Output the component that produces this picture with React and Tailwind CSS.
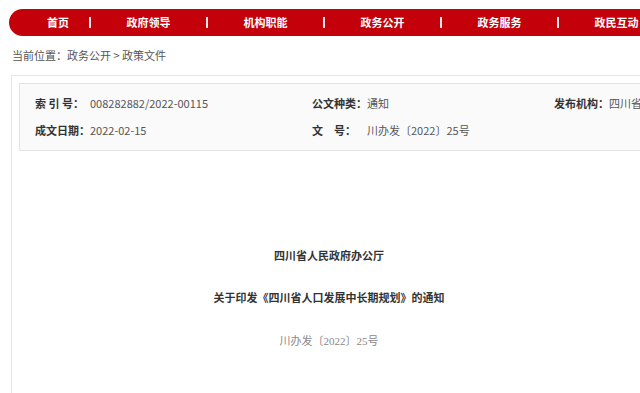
import React from "react";

const navItems = ["政府领导", "机构职能", "政务公开", "政务服务", "政民互动"];

function InfoCell({ label, value, width }) {
  return (
    <div className={`flex items-center shrink-0 ${width}`}>
      <span className="w-[55px] shrink-0 font-bold text-[#333]">{label}</span>
      <span className="whitespace-nowrap text-[#555]">{value}</span>
    </div>
  );
}

export default function App() {
  return (
    <div
      className="w-[640px] h-[393px] overflow-hidden bg-white"
      style={{ fontFamily: '"Noto Sans CJK SC", "Liberation Sans", sans-serif' }}
    >
      <div className="w-[700px]">
        {/* top nav */}
        <nav className="ml-[9px] mt-[9px] h-[27px] bg-[#c4000b] rounded-l-full flex items-center text-white text-[11px] font-bold">
          <span className="pl-[18px] w-[80px] text-center shrink-0">首页</span>
          {navItems.map((item) => (
            <React.Fragment key={item}>
              <span className="w-[2px] h-[11px] bg-white/90 shrink-0" />
              <span className="w-[115px] text-center shrink-0">{item}</span>
            </React.Fragment>
          ))}
        </nav>

        {/* breadcrumb */}
        <div className="h-[39px] flex items-center pl-[12px] text-[11px] text-[#555]">
          当前位置：政务公开 &gt; 政策文件
        </div>

        {/* main panel */}
        <div className="ml-[11px] w-[636px] h-[400px] border border-[#e6e6e6]">
          <div className="ml-[7px] mt-[7px] w-[700px] h-[68px] border border-[#e3e3e3] bg-[#fafafa] pl-[15px] pt-[9px] text-[11px]">
            <div className="flex h-[20px]">
              <InfoCell label="索 引 号：" value="008282882/2022-00115" width="w-[277px]" />
              <InfoCell label="公文种类：" value="通知" width="w-[242px]" />
              <InfoCell label="发布机构：" value="四川省人民政府办公厅" width="w-[200px]" />
            </div>
            <div className="flex h-[20px] mt-[7px]">
              <InfoCell label="成文日期：" value="2022-02-15" width="w-[277px]" />
              <InfoCell label="文　号：" value="川办发〔2022〕25号" width="w-[242px]" />
            </div>
          </div>

          <div
            className="flex flex-col items-center text-[11px]"
            style={{ fontFamily: '"Liberation Serif", "Noto Sans CJK SC", serif' }}
          >
            <div className="mt-[95px] h-[20px] leading-[20px] font-bold text-[#333]">四川省人民政府办公厅</div>
            <div className="mt-[22px] h-[20px] leading-[20px] font-bold text-[#333]">
              关于印发《四川省人口发展中长期规划》的通知
            </div>
            <div className="mt-[23px] h-[20px] leading-[20px] text-[#888]">川办发〔2022〕25号</div>
          </div>
        </div>
      </div>
    </div>
  );
}
